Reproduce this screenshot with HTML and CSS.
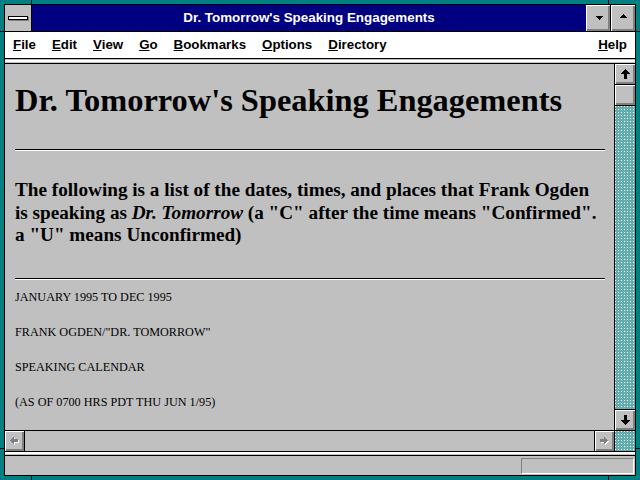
FILE: index.html
```html
<!DOCTYPE html>
<html>
<head>
<meta charset="utf-8">
<title>Dr. Tomorrow's Speaking Engagements</title>
<link rel="stylesheet" href="styles.css">
</head>
<body>
<div class="window">
  <div class="frame">
    <div class="titlebar">
      <div class="sysmenu"><span class="sysbar"></span></div>
      <div class="title">Dr. Tomorrow's Speaking Engagements</div>
      <div class="tbtn"><svg width="7" height="4" viewBox="0 0 7 4"><path d="M0 0h7v1h-1v1h-1v1h-1v1h-1v-1h-1v-1h-1v-1h-1z" fill="#000"/></svg></div>
      <div class="tbtn max"><svg class="up-tri" width="7" height="4" viewBox="0 0 7 4"><path d="M0 4h7v-1h-1v-1h-1v-1h-1v-1h-1v1h-1v1h-1v1h-1z" fill="#000"/></svg></div>
    </div>
    <div class="menubar">
      <span><u>F</u>ile</span>
      <span><u>E</u>dit</span>
      <span><u>V</u>iew</span>
      <span><u>G</u>o</span>
      <span><u>B</u>ookmarks</span>
      <span><u>O</u>ptions</span>
      <span><u>D</u>irectory</span>
      <span class="help"><u>H</u>elp</span>
    </div>
    <div class="sep"></div>
    <div class="viewport">
      <div class="content">
        <h1>Dr. Tomorrow's Speaking Engagements</h1>
        <hr class="rule">
        <p class="lead">The following is a list of the dates, times, and places that Frank Ogden<br>is speaking as <i>Dr. Tomorrow</i> (a "C" after the time means "Confirmed".<br>a "U" means Unconfirmed)</p>
        <hr class="rule rule2">
        <p class="line">JANUARY 1995 TO DEC 1995</p>
        <p class="line">FRANK OGDEN/"DR. TOMORROW"</p>
        <p class="line">SPEAKING CALENDAR</p>
        <p class="line">(AS OF 0700 HRS PDT THU JUN 1/95)</p>
      </div>
      <div class="vscroll">
        <div class="sbtn"><svg width="9" height="10" viewBox="0 0 9 10"><path d="M4 0h1v1h1v1h1v1h1v1h1v1H6v5H3V5H0V4h1V3h1V2h1V1h1z" fill="#000"/></svg></div>
        <div class="sbtn thumb"></div>
        <div class="track"></div>
        <div class="sbtn down"><svg width="9" height="10" viewBox="0 0 9 10"><path d="M4 10h1v-1h1v-1h1v-1h1v-1h1v-1H6V0H3v5H0v1h1v1h1v1h1v1h1z" fill="#000"/></svg></div>
      </div>
    </div>
    <div class="hscroll">
      <div class="sbtn hbtn left"><svg width="9" height="8" viewBox="0 0 9 8"><path transform="translate(1,1)" d="M0 3h1V2h1V1h1V0h1v2h4v3H4v2H3V6H2V5H1V4H0z" fill="#fff"/><path d="M0 3h1V2h1V1h1V0h1v2h4v3H4v2H3V6H2V5H1V4H0z" fill="#808080"/></svg></div>
      <div class="htrack"></div>
      <div class="sbtn hbtn right"><svg width="9" height="8" viewBox="0 0 9 8"><g transform="translate(8,0) scale(-1,1)"><path transform="translate(-1,1)" d="M0 3h1V2h1V1h1V0h1v2h4v3H4v2H3V6H2V5H1V4H0z" fill="#fff"/><path d="M0 3h1V2h1V1h1V0h1v2h4v3H4v2H3V6H2V5H1V4H0z" fill="#808080"/></g></svg></div>
      <div class="corner"></div>
    </div>
    <div class="sep2"></div>
    <div class="status"><div class="statbox"></div></div>
  </div>
  <span class="tick tv t1"></span>
  <span class="tick tv t2"></span>
  <span class="tick tv t3"></span>
  <span class="tick tv t4"></span>
  <span class="tick th t5"></span>
  <span class="tick th t6"></span>
  <span class="tick th t7"></span>
  <span class="tick th t8"></span>
</div>
</body>
</html>
```
FILE: styles.css
```css
html, body {
  margin: 0;
  padding: 0;
  background: #008080;
}

.window {
  position: relative;
  width: 640px;
  height: 480px;
  padding: 4px;
  box-sizing: border-box;
  background: #008080;
  font-family: "Liberation Sans", Arial, sans-serif;
}

.frame {
  height: 100%;
  box-sizing: border-box;
  border: 1px solid #000;
  background: #c0c0c0;
  display: flex;
  flex-direction: column;
}

/* title bar */
.titlebar {
  flex: none;
  display: flex;
  height: 26px;
  border-bottom: 1px solid #000;
}

.sysmenu {
  width: 26px;
  border-right: 1px solid #000;
  background: #c0c0c0;
  display: flex;
  align-items: center;
  justify-content: center;
}

.sysbar {
  display: block;
  width: 18px;
  height: 2px;
  margin: 0 1px 0 0;
  background: #fff;
  border: 1px solid #000;
  box-shadow: 1px 1px 0 #808080;
}

.title {
  flex: 1;
  background: #000080;
  color: #fff;
  font-weight: bold;
  font-size: 13.4px;
  line-height: 26px;
  text-align: center;
  white-space: nowrap;
}

.tbtn {
  width: 24px;
  background: #c0c0c0;
  box-shadow: inset 1px 1px 0 #fff, inset -1px -1px 0 #808080, inset -2px -2px 0 #808080;
  display: flex;
  align-items: center;
  justify-content: center;
}

.tbtn svg {
  display: block;
  margin: 0 0 0 2px;
}

.tbtn.max {
  border-left: 1px solid #000;
}

.tbtn .up-tri {
  margin: 0 0 4px 1px;
}

/* menu bar */
.menubar {
  flex: none;
  display: flex;
  gap: 16px;
  height: 26px;
  padding: 0 8px 0 8px;
  background: #fff;
  border-bottom: 1px solid #000;
  font-size: 13.3px;
  font-weight: bold;
  line-height: 25px;
  color: #000;
  white-space: nowrap;
}

.menubar u {
  text-decoration: underline;
  text-underline-offset: 1px;
}

.menubar .help {
  margin-left: auto;
}

.sep {
  flex: none;
  height: 4px;
  background: linear-gradient(#c0c0c0 0 1px, #fff 1px 3px, #c0c0c0 3px);
  border-bottom: 1px solid #000;
}

/* document view */
.viewport {
  flex: 1;
  min-height: 0;
  display: flex;
}

.content {
  flex: 1;
  min-width: 0;
  padding: 18px 9px 0 10px;
  overflow: hidden;
  font-family: "Liberation Serif", "Times New Roman", serif;
  color: #000;
}

.content h1 {
  margin: 0;
  font-size: 32.4px;
  line-height: 36px;
  font-weight: bold;
  white-space: nowrap;
}

.rule {
  margin: 31px 0 0;
  height: 0;
  border: 0;
  border-top: 1px solid #000;
  border-bottom: 1px solid #fff;
}

.rule2 {
  margin-top: 31.5px;
}

.lead {
  margin: 28px 0 0;
  font-size: 19.2px;
  line-height: 22.5px;
  font-weight: bold;
  white-space: nowrap;
}

.line {
  margin: 10px 0 0;
  font-size: 12.2px;
  line-height: 14px;
  white-space: nowrap;
}

.line + .line {
  margin-top: 21px;
}

/* scrollbars */
.track,
.corner {
  background:
    conic-gradient(at 1px 1px, transparent 75%, #fff 0) 0 0 / 3px 3px,
    repeating-conic-gradient(#38d0d0 0 25%, #8c8c8c 0 50%) 0 0 / 2px 2px;
}

.vscroll {
  flex: none;
  width: 20px;
  border-left: 1px solid #000;
  display: flex;
  flex-direction: column;
}

.sbtn {
  flex: none;
  width: 20px;
  height: 20px;
  background: #c0c0c0;
  box-shadow: inset 1px 1px 0 #fff, inset -1px -1px 0 #808080, inset -2px -2px 0 #808080;
  display: flex;
  align-items: center;
  justify-content: center;
}

.sbtn svg {
  display: block;
}

.thumb {
  border-top: 1px solid #000;
  border-bottom: 1px solid #000;
}

.track {
  flex: 1;
}

.sbtn.down {
  border-top: 1px solid #000;
}

.hscroll {
  flex: none;
  display: flex;
  height: 20px;
  border-top: 1px solid #000;
  border-bottom: 1px solid #000;
}

.hbtn {
  width: 19px;
}

.hbtn.left {
  border-right: 1px solid #000;
}

.hbtn.right {
  border-left: 1px solid #000;
}

.htrack {
  flex: 1;
  background: #c0c0c0;
}

.corner {
  flex: none;
  width: 20px;
  border-left: 1px solid #000;
}

.sep2 {
  flex: none;
  height: 3px;
  background: linear-gradient(#fff 0 2px, #c0c0c0 2px);
  border-bottom: 1px solid #000;
}

.status {
  flex: none;
  height: 19px;
  box-sizing: border-box;
  display: flex;
  justify-content: flex-end;
  padding: 2px 1px 0 0;
}

.statbox {
  width: 113px;
  height: 16px;
  box-sizing: border-box;
  border: 1px solid;
  border-color: #808080 #fff #fff #808080;
}

/* black notches on the sizing border */
.tick {
  position: absolute;
  background: #000;
}

.tv {
  width: 1px;
  height: 4px;
}

.th {
  width: 4px;
  height: 1px;
}

.t1 { left: 31px; top: 0; }
.t2 { left: 608px; top: 0; }
.t3 { left: 31px; bottom: 0; }
.t4 { left: 608px; bottom: 0; }
.t5 { left: 0; top: 31px; }
.t6 { left: 0; top: 448px; }
.t7 { right: 0; top: 31px; }
.t8 { right: 0; top: 448px; }
```
